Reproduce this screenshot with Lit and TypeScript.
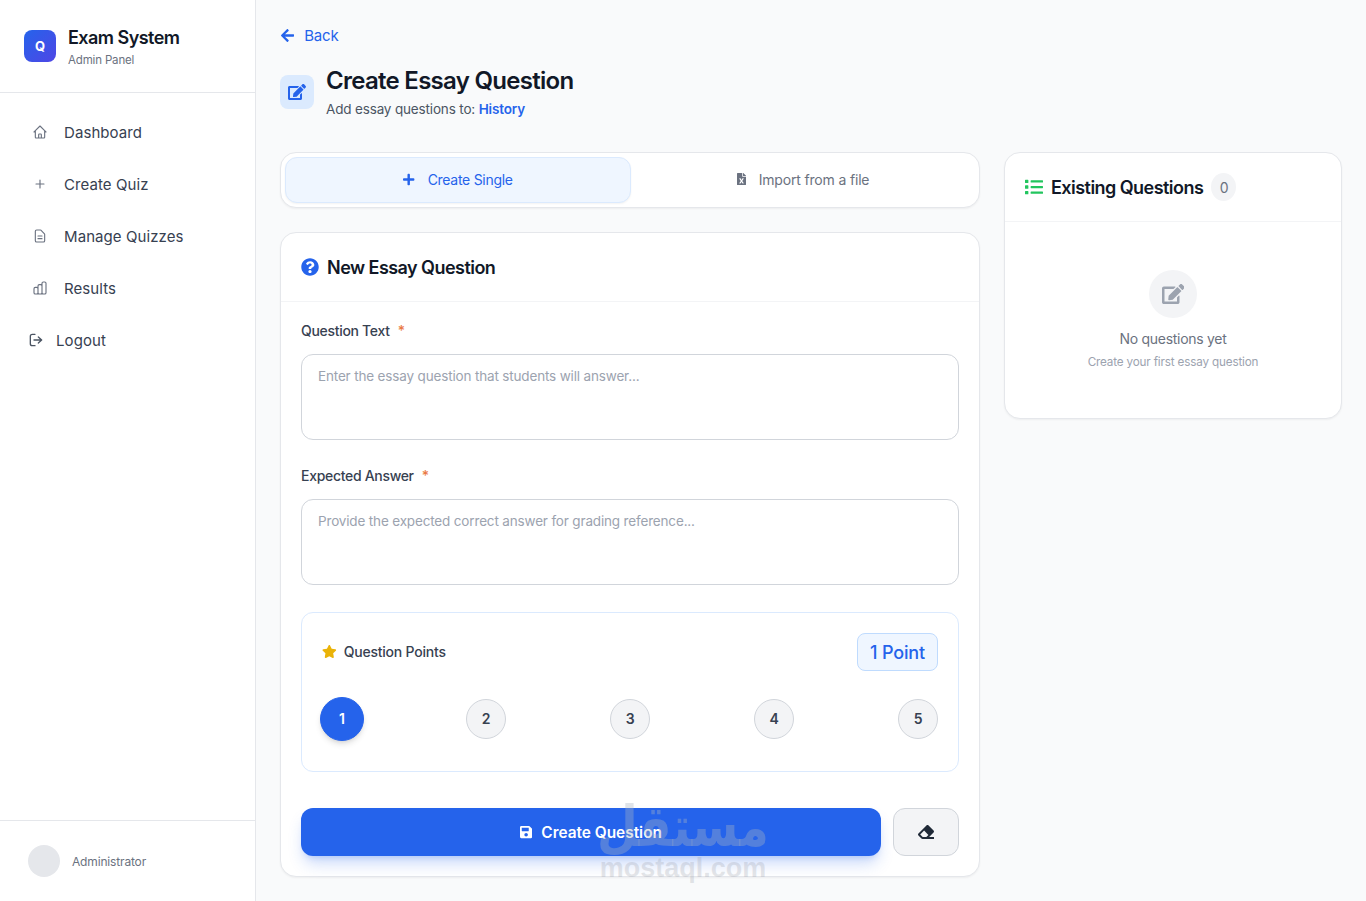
import { LitElement, css, html, svg } from 'lit';
import { customElement } from 'lit/decorators.js';

const FA = {
  edit: [576, 'M402.6 83.2l90.2 90.2c3.8 3.8 3.8 10 0 13.8L274.4 405.6l-92.8 10.3c-12.4 1.4-22.9-9.1-21.5-21.5l10.3-92.8L388.8 83.2c3.8-3.8 10-3.8 13.8 0zm162-22.9l-48.8-48.8c-15.2-15.2-39.9-15.2-55.2 0l-35.4 35.4c-3.8 3.8-3.8 10 0 13.8l90.2 90.2c3.8 3.8 10 3.8 13.8 0l35.4-35.4c15.2-15.3 15.2-40 0-55.2zM384 346.2V448H64V128h229.8c3.2 0 6.2-1.3 8.5-3.5l40-40c7.6-7.6 2.2-20.5-8.5-20.5H48C21.5 64 0 85.5 0 112v352c0 26.5 21.5 48 48 48h352c26.5 0 48-21.5 48-48V306.2c0-10.7-12.9-16-20.5-8.5l-40 40c-2.2 2.3-3.5 5.3-3.5 8.5z'],
  question: [512, 'M504 256c0 136.997-111.043 248-248 248S8 392.997 8 256C8 119.083 119.043 8 256 8s248 111.083 248 248zM262.655 90c-54.497 0-89.255 22.957-116.549 63.758-3.536 5.286-2.353 12.415 2.715 16.258l34.699 26.31c5.205 3.947 12.621 3.008 16.665-2.122 17.864-22.658 30.113-35.797 57.303-35.797 20.429 0 45.698 13.148 45.698 32.958 0 14.976-12.363 22.667-32.534 33.976C247.128 238.528 216 254.941 216 296v4c0 6.627 5.373 12 12 12h56c6.627 0 12-5.373 12-12v-1.333c0-28.462 83.186-29.647 83.186-106.667 0-58.002-60.165-102-116.531-102zM256 338c-25.365 0-46 20.635-46 46 0 25.364 20.635 46 46 46s46-20.636 46-46c0-25.365-20.635-46-46-46z'],
  star: [576, 'M259.3 17.8L194 150.2 47.9 171.5c-26.2 3.8-36.7 36.1-17.7 54.6l105.7 103-25 145.5c-4.5 26.3 23.2 46 46.4 33.7L288 439.6l130.7 68.7c23.2 12.2 50.9-7.4 46.4-33.7l-25-145.5 105.7-103c19-18.5 8.5-50.8-17.7-54.6L382 150.2 316.7 17.8c-11.7-23.6-45.6-24-57.4 0z'],
  save: [448, 'M433.941 129.941l-83.882-83.882A48 48 0 0 0 316.118 32H48C21.49 32 0 53.49 0 80v352c0 26.51 21.49 48 48 48h352c26.51 0 48-21.49 48-48V163.882a48 48 0 0 0-14.059-33.941zM224 416c-35.346 0-64-28.654-64-64 0-35.346 28.654-64 64-64s64 28.654 64 64c0 35.346-28.654 64-64 64zm96-304.52V212c0 6.627-5.373 12-12 12H76c-6.627 0-12-5.373-12-12V108c0-6.627 5.373-12 12-12h228.52c3.183 0 6.235 1.264 8.485 3.515l3.48 3.48A11.996 11.996 0 0 1 320 111.48z'],
  eraser: [512, 'M497.941 273.941c18.745-18.745 18.745-49.137 0-67.882l-160-160c-18.745-18.745-49.137-18.745-67.882 0l-256 256c-18.745 18.745-18.745 49.137 0 67.882l96 96A48.004 48.004 0 0 0 144 480h356c6.627 0 12-5.373 12-12v-40c0-6.627-5.373-12-12-12H355.883l142.058-142.059zm-302.627-62.627l137.373 137.373L265.373 416H150.628l-80-80 124.686-124.686z'],
  back: [448, 'M257.5 445.1l-22.2 22.2c-9.4 9.4-24.6 9.4-33.9 0L7 273c-9.4-9.4-9.4-24.6 0-33.9L201.4 44.7c9.4-9.4 24.6-9.4 33.9 0l22.2 22.2c9.5 9.5 9.3 25-.4 34.3L136.6 216H424c13.3 0 24 10.7 24 24v32c0 13.3-10.7 24-24 24H136.6l120.5 114.8c9.8 9.3 10 24.8.4 34.3z'],
  list: [512, 'M80 368H16a16 16 0 0 0-16 16v64a16 16 0 0 0 16 16h64a16 16 0 0 0 16-16v-64a16 16 0 0 0-16-16zm0-320H16A16 16 0 0 0 0 64v64a16 16 0 0 0 16 16h64a16 16 0 0 0 16-16V64a16 16 0 0 0-16-16zm0 160H16a16 16 0 0 0-16 16v64a16 16 0 0 0 16 16h64a16 16 0 0 0 16-16v-64a16 16 0 0 0-16-16zm416 176H176a16 16 0 0 0-16 16v32a16 16 0 0 0 16 16h320a16 16 0 0 0 16-16v-32a16 16 0 0 0-16-16zm0-320H176a16 16 0 0 0-16 16v32a16 16 0 0 0 16 16h320a16 16 0 0 0 16-16V80a16 16 0 0 0-16-16zm0 160H176a16 16 0 0 0-16 16v32a16 16 0 0 0 16 16h320a16 16 0 0 0 16-16v-32a16 16 0 0 0-16-16z'],
  plus: [448, 'M416 208H272V64c0-17.67-14.33-32-32-32h-32c-17.67 0-32 14.33-32 32v144H32c-17.67 0-32 14.33-32 32v32c0 17.67 14.33 32 32 32h144v144c0 17.67 14.33 32 32 32h32c17.67 0 32-14.33 32-32V304h144c17.67 0 32-14.33 32-32v-32c0-17.67-14.33-32-32-32z'],
  excel: [384, 'M224 136V0H24C10.7 0 0 10.7 0 24v464c0 13.3 10.7 24 24 24h336c13.3 0 24-10.7 24-24V160H248c-13.2 0-24-10.8-24-24zm60.1 106.5L224 336l60.1 93.5c5.1 8-.6 18.5-10.1 18.5h-34.9c-4.4 0-8.5-2.4-10.6-6.3C208.9 405.5 192 373 192 373c-6.1 14.1-9.5 19-36.6 68.8-2.1 3.9-6.1 6.3-10.5 6.3H110c-9.5 0-15.2-10.5-10.1-18.5l60.3-93.5-60.3-93.5c-5.2-8 .6-18.5 10.1-18.5h34.8c4.4 0 8.5 2.4 10.6 6.3 26.1 48.8 20 33.6 36.6 68.5 0 0 6.1-11.7 36.6-68.5 2.1-3.9 6.2-6.3 10.6-6.3H274c9.5-.1 15.2 10.4 10.1 18.4zM384 121.9v6.1H256V0h6.1c6.4 0 12.5 2.5 17 7l97.9 98c4.5 4.5 7 10.6 7 16.9z'],
} as const;

const faIcon = (name: keyof typeof FA, height: number, color: string) => {
  const [w, d] = FA[name];
  return html`<svg class="fa" viewBox="0 0 ${w} 512" height=${height} width=${(height * w) / 512} style="color:${color}">
    ${svg`<path fill="currentColor" d=${d}></path>`}
  </svg>`;
};

const navIcon = (d: string) => html`<svg class="nav-icon" viewBox="0 0 24 24" width="16" height="16">
  ${svg`<path d=${d}></path>`}
</svg>`;

const NAV = [
  { label: 'Dashboard', d: 'M3 12l2-2m0 0l7-7 7 7M5 10v10a1 1 0 001 1h3m10-11l2 2m-2-2v10a1 1 0 01-1 1h-3m-6 0a1 1 0 001-1v-4a1 1 0 011-1h2a1 1 0 011 1v4a1 1 0 001 1m-6 0h6' },
  { label: 'Create Quiz', d: 'M12 6v12m6-6H6' },
  { label: 'Manage Quizzes', d: 'M9 12h6m-6 4h6m2 5H7a2 2 0 01-2-2V5a2 2 0 012-2h5.586a1 1 0 01.707.293l5.414 5.414a1 1 0 01.293.707V19a2 2 0 01-2 2z' },
  { label: 'Results', d: 'M9 19v-6a2 2 0 00-2-2H5a2 2 0 00-2 2v6a2 2 0 002 2h2a2 2 0 002-2zm0 0V9a2 2 0 012-2h2a2 2 0 012 2v10m-6 0a2 2 0 002 2h2a2 2 0 002-2m0 0V5a2 2 0 012-2h2a2 2 0 012 2v14a2 2 0 01-2 2h-2a2 2 0 01-2-2z' },
];

@customElement('app-root')
export class AppRoot extends LitElement {
  static override styles = css`
    :host {
      display: flex;
      position: relative;
      min-height: 901px;
      overflow: hidden;
      background: #f9fafb;
      color: #111827;
      font-family: Inter, 'Noto Sans', sans-serif;
      letter-spacing: -0.01em;
    }
    * { box-sizing: border-box; }
    .fa { display: block; flex: none; }

    .sidebar {
      width: 256px;
      flex: none;
      display: flex;
      flex-direction: column;
      background: #fff;
      border-right: 1px solid #e5e7eb;
    }
    .brand {
      height: 93px;
      display: flex;
      align-items: center;
      gap: 12px;
      padding: 0 24px;
      border-bottom: 1px solid #e5e7eb;
    }
    .logo {
      width: 32px;
      height: 32px;
      border-radius: 8px;
      background: linear-gradient(135deg, #2563eb, #4f46e5);
      color: #fff;
      font-size: 13px;
      font-weight: 700;
      display: flex;
      align-items: center;
      justify-content: center;
    }
    .brand-text { padding-top: 2px; }
    .brand-name { font-size: 18px; font-weight: 600; line-height: 24px; letter-spacing: -0.03em; }
    .brand-sub { font-size: 11.5px; line-height: 16px; color: #6b7280; margin-top: 2px; }
    nav { padding-top: 13px; flex: 1; }
    .nav-item {
      height: 52px;
      display: flex;
      align-items: center;
      gap: 16px;
      padding-left: 32px;
      font-size: 15px;
      letter-spacing: 0.08px;
      color: #374151;
    }
    .nav-item.logout { gap: 12px; padding-left: 28px; }
    .nav-icon { fill: none; stroke: #6b7280; stroke-width: 1.7; stroke-linecap: round; stroke-linejoin: round; flex: none; }
    .logout .nav-icon { stroke: #4b5563; stroke-width: 2; }
    .side-foot {
      height: 81px;
      border-top: 1px solid #e5e7eb;
      display: flex;
      align-items: center;
      gap: 12px;
      padding-left: 28px;
      font-size: 12px;
      color: #6b7280;
    }
    .avatar { width: 32px; height: 32px; border-radius: 50%; background: #e5e7eb; }

    main { flex: 1; min-width: 0; padding: 24px; }
    .back {
      height: 22px;
      display: flex;
      align-items: center;
      gap: 10px;
      padding-left: 1px;
      font-size: 15px;
      color: #2563eb;
    }
    .page-head { display: flex; align-items: center; gap: 12px; margin-top: 18px; height: 56px; }
    .head-tile {
      width: 34px;
      height: 34px;
      border-radius: 8px;
      background: #dbeafe;
      display: flex;
      align-items: center;
      justify-content: center;
    }
    h1 { margin: 0; font-size: 24px; line-height: 32px; font-weight: 600; letter-spacing: -0.03em; }
    .page-sub { font-size: 13.5px; line-height: 20px; color: #4b5563; margin-top: 2px; }
    .page-sub b { color: #2563eb; font-weight: 600; }

    .grid { display: grid; grid-template-columns: 700px 338px; gap: 24px; margin-top: 32px; align-items: start; }
    .col { display: flex; flex-direction: column; gap: 24px; }
    .panel {
      background: #fff;
      border: 1px solid #e5e7eb;
      border-radius: 16px;
      box-shadow: 0 1px 2px rgba(0, 0, 0, 0.05);
    }
    .tabs { display: flex; padding: 4px; height: 56px; }
    .tab {
      flex: 1;
      display: flex;
      align-items: center;
      justify-content: center;
      gap: 13px;
      padding-bottom: 2px;
      font-size: 14px;
      letter-spacing: -0.012em;
      color: #6b7280;
      border: 1px solid transparent;
      border-radius: 12px;
    }
    .tab.active {
      flex: none;
      width: 346px;
      letter-spacing: -0.02em;
      background: #eff6ff;
      border-color: #dbeafe;
      color: #2563eb;
      box-shadow: 0 1px 2px rgba(0, 0, 0, 0.05);
    }
    .panel-head {
      height: 69px;
      display: flex;
      align-items: center;
      gap: 8px;
      padding: 0 20px;
      border-bottom: 1px solid #f3f4f6;
      font-size: 18px;
      font-weight: 600;
      letter-spacing: -0.03em;
    }
    .form { padding: 19px 20px 20px; display: flex; flex-direction: column; }
    .label { font-size: 14px; line-height: 20px; font-weight: 500; letter-spacing: -0.022em; color: #374151; display: flex; gap: 8px; }
    .label span { color: #ea7a45; }
    textarea {
      display: block;
      width: 100%;
      height: 86px;
      margin-top: 13px;
      padding: 11px 16px;
      border: 1px solid #d1d5db;
      border-radius: 12px;
      background: #fff;
      font: inherit;
      font-size: 13.5px;
      line-height: 20px;
      letter-spacing: inherit;
      resize: none;
      outline: none;
    }
    textarea::placeholder { color: #9ca3af; opacity: 1; }
    .field + .field { margin-top: 26px; }
    .points {
      margin-top: 27px;
      height: 160px;
      padding: 20px;
      border: 1px solid #dbeafe;
      border-radius: 12px;
    }
    .points-top { display: flex; align-items: center; justify-content: space-between; }
    .points-title { display: flex; align-items: center; gap: 7px; padding-bottom: 2px; font-size: 14px; font-weight: 500; letter-spacing: -0.015em; color: #374151; }
    .badge {
      height: 38px;
      padding: 0 12px;
      display: flex;
      align-items: center;
      background: #eff6ff;
      border: 1px solid #bfdbfe;
      border-radius: 8px;
      color: #2563eb;
      font-size: 18px;
      font-weight: 500;
    }
    .scale { display: flex; justify-content: space-between; margin-top: 28px; }
    .dot {
      width: 40px;
      height: 40px;
      padding-bottom: 2px;
      border-radius: 50%;
      display: flex;
      align-items: center;
      justify-content: center;
      background: #f3f4f6;
      border: 1px solid #d1d5db;
      color: #374151;
      font-size: 14px;
      font-weight: 600;
    }
    .dot.on {
      width: 44px;
      height: 44px;
      margin: -2px;
      background: #2563eb;
      border-color: #2563eb;
      color: #fff;
      box-shadow: 0 4px 6px -1px rgba(0, 0, 0, 0.12), 0 2px 4px -2px rgba(0, 0, 0, 0.1);
    }
    .actions { display: flex; gap: 12px; margin-top: 36px; }
    .submit {
      flex: 1;
      height: 48px;
      display: flex;
      align-items: center;
      justify-content: center;
      gap: 9px;
      border: none;
      border-radius: 12px;
      background: #2563eb;
      color: #fff;
      font: inherit;
      font-size: 15.4px;
      font-weight: 600;
      box-shadow: 0 10px 15px -3px rgba(37, 99, 235, 0.25), 0 4px 6px -4px rgba(37, 99, 235, 0.25);
    }
    .clear {
      width: 66px;
      height: 48px;
      display: flex;
      align-items: center;
      justify-content: center;
      background: #f3f4f6;
      border: 1px solid #d1d5db;
      border-radius: 12px;
    }
    .count {
      width: 25px;
      height: 28px;
      border-radius: 50%;
      background: #f3f4f6;
      color: #6b7280;
      font-size: 14px;
      font-weight: 400;
      display: flex;
      align-items: center;
      justify-content: center;
    }
    .empty { height: 196px; padding-top: 48px; display: flex; flex-direction: column; align-items: center; }
    .empty-icon {
      width: 48px;
      height: 48px;
      border-radius: 50%;
      background: #f3f4f6;
      display: flex;
      align-items: center;
      justify-content: center;
    }
    .empty-title { margin-top: 11px; font-size: 14px; line-height: 20px; letter-spacing: -0.02em; color: #6b7280; }
    .empty-sub { margin-top: 4px; font-size: 11.7px; line-height: 18px; color: #9ca3af; }

    .mark {
      position: absolute;
      left: 583px;
      top: 800px;
      width: 200px;
      pointer-events: none;
      text-align: center;
      font-weight: 700;
      letter-spacing: 0;
    }
    .mark-ar {
      font-family: 'DejaVu Sans', sans-serif;
      font-size: 47px;
      line-height: 54px;
      color: rgba(170, 180, 195, 0.36);
      transform: scaleY(1.2);
    }
    .mark-en { font-family: 'Liberation Sans', sans-serif; font-size: 27px; line-height: 28px; color: rgba(150, 155, 165, 0.25); }
  `;

  override render() {
    return html`
      <aside class="sidebar">
        <div class="brand">
          <div class="logo">Q</div>
          <div class="brand-text">
            <div class="brand-name">Exam System</div>
            <div class="brand-sub">Admin Panel</div>
          </div>
        </div>
        <nav>
          ${NAV.map((n) => html`<div class="nav-item">${navIcon(n.d)}<span>${n.label}</span></div>`)}
          <div class="nav-item logout">
            ${navIcon('M10.5 20.5H6.5a3 3 0 0 1-3-3v-11a3 3 0 0 1 3-3h4M15.5 16.5 20.5 12 15.5 7.5M20.5 12H9')}<span>Logout</span>
          </div>
        </nav>
        <div class="side-foot"><div class="avatar"></div><span>Administrator</span></div>
      </aside>

      <main>
        <div class="back">${faIcon('back', 15, '#2563eb')}<span>Back</span></div>
        <div class="page-head">
          <div class="head-tile">${faIcon('edit', 16, '#2563eb')}</div>
          <div>
            <h1>Create Essay Question</h1>
            <div class="page-sub">Add essay questions to: <b>History</b></div>
          </div>
        </div>

        <div class="grid">
          <div class="col">
            <div class="panel tabs">
              <div class="tab active">${faIcon('plus', 13, '#2563eb')}<span>Create Single</span></div>
              <div class="tab">${faIcon('excel', 12, '#6b7280')}<span>Import from a file</span></div>
            </div>
            <div class="panel">
              <div class="panel-head">${faIcon('question', 18, '#2563eb')}<span>New Essay Question</span></div>
              <div class="form">
                <div class="field">
                  <div class="label">Question Text <span>*</span></div>
                  <textarea placeholder="Enter the essay question that students will answer..."></textarea>
                </div>
                <div class="field">
                  <div class="label">Expected Answer <span>*</span></div>
                  <textarea placeholder="Provide the expected correct answer for grading reference..."></textarea>
                </div>
                <div class="points">
                  <div class="points-top">
                    <div class="points-title">${faIcon('star', 13, '#eab308')}<span>Question Points</span></div>
                    <div class="badge">1 Point</div>
                  </div>
                  <div class="scale">
                    ${[1, 2, 3, 4, 5].map((p) => html`<div class="dot ${p === 1 ? 'on' : ''}">${p}</div>`)}
                  </div>
                </div>
                <div class="actions">
                  <button class="submit">${faIcon('save', 14, '#fff')}<span>Create Question</span></button>
                  <div class="clear">${faIcon('eraser', 16, '#1f2937')}</div>
                </div>
              </div>
            </div>
          </div>

          <div class="panel">
            <div class="panel-head">${faIcon('list', 18, '#22c55e')}<span>Existing Questions</span><div class="count">0</div></div>
            <div class="empty">
              <div class="empty-icon">${faIcon('edit', 20, '#9ca3af')}</div>
              <div class="empty-title">No questions yet</div>
              <div class="empty-sub">Create your first essay question</div>
            </div>
          </div>
        </div>
      </main>

      <div class="mark">
        <div class="mark-ar" dir="rtl">مستقل</div>
        <div class="mark-en">mostaql.com</div>
      </div>
    `;
  }
}
